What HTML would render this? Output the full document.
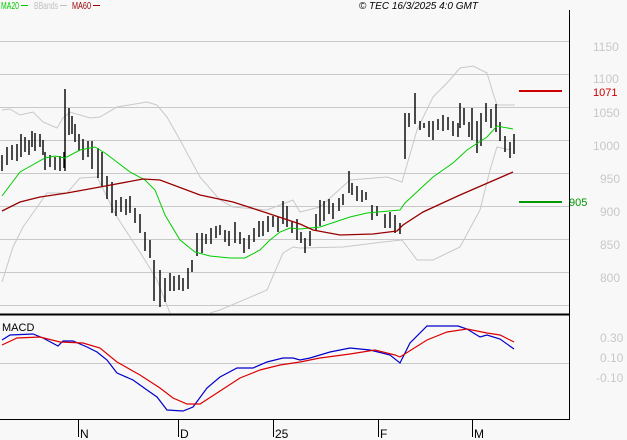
<!DOCTYPE html>
<html><head><meta charset="utf-8"><style>
html,body{margin:0;padding:0;background:#f8f8f8;}
svg{display:block;font-family:"Liberation Sans",sans-serif;}
</style></head><body>
<svg width="627" height="440" viewBox="0 0 627 440" xmlns="http://www.w3.org/2000/svg">
<rect width="627" height="440" fill="#f8f8f8"/>
<g stroke="#c8c8c8" stroke-width="1">
<line x1="0" y1="41.5" x2="569" y2="41.5"/><line x1="0" y1="74.5" x2="569" y2="74.5"/>
<line x1="0" y1="107.5" x2="569" y2="107.5"/><line x1="0" y1="140.5" x2="569" y2="140.5"/>
<line x1="0" y1="173.5" x2="569" y2="173.5"/><line x1="0" y1="206.5" x2="569" y2="206.5"/>
<line x1="0" y1="239.5" x2="569" y2="239.5"/><line x1="0" y1="272.5" x2="569" y2="272.5"/>
<line x1="0" y1="305.5" x2="569" y2="305.5"/><line x1="0" y1="363.5" x2="569" y2="363.5"/>
</g>
<g fill="none" stroke="#c8c8c8" stroke-width="1">
<polyline points="2,110 10,109 20,115 33,112 43,122 57,128 63,118 70,112 90,118 100,117 117,107 147,102 157,105 167,117 180,140 200,177 220,200 233,207 267,210 293,200 300,212 320,207 350,180 387,177 402,182 417,130 433,97 447,83 460,68 473,66 487,73 493,93 497,105 515,105"/>
<polyline points="2,282 13,247 23,227 40,203 47,193 67,193 80,178 97,177 117,217 143,257 157,280 170,313"/>
<polyline points="210,313 220,310 267,290 283,253 293,247 300,248 343,247 383,242 402,240 417,260 433,260 460,247 480,210 490,170 497,147 510,150"/>
</g>
<g stroke="#000" stroke-width="1.4" fill="none">
<path d="M2,155V171M7,147V165M12,145V160M17,144V161M21,134V157M25,137V152M29,140V155M32,131V147M35,133V151M40,134V147M43,140V155M45,152V170M50,155V167M55,157V170M60,156V171M64,152V168M65,89V171M69,108V135M72,116V134M75,124V142M79,134V151M83,139V160M88,141V157M92,141V169M98,148V178M102,152V187M107,176V199M112,182V213M116,200V216M121,197V212M126,199V215M130,196V213M135,208V223M140,214V233M145,232V251M150,240V258M154,260V301M160,270V307M165,278V302M170,273V291M174,276V291M179,275V290M183,278V291M188,268V289M192,260V272M197,233V256M202,233V253M206,234V244M211,228V244M216,226V238M220,225V235M225,230V242M229,231V246M235,222V243M240,232V244M244,238V253M249,235V249M254,228V242M259,221V237M263,221V236M268,216V232M273,216V227M278,217V232M283,201V224M287,206V227M292,222V233M297,219V240M301,232V243M305,238V253M310,231V246M316,214V230M320,200V226M324,201V221M329,199V214M333,203V219M339,198V211M343,194V205M349,171V193M352,183V195M357,186V201M362,190V202M366,192V200M372,205V220M377,206V216M385,214V228M390,212V228M395,215V233M400,223V234M405,113V159M409,113V127M415,93V124M420,121V130M424,123V128M429,121V137M433,121V140M438,119V130M443,115V131M448,117V130M453,121V136M458,123V137M460,103V128M464,108V125M469,122V137M472,108V140M477,121V153M481,113V146M486,103V122M491,109V128M496,104V132M500,122V141M505,136V152M510,142V158M514,134V154"/>
</g>
<polyline fill="none" stroke="#00cc00" stroke-width="1" points="2,196 20,172 45,158 55,156 65,158 80,150 95,147 105,153 130,172 145,180 155,190 165,215 180,240 195,252 210,256 230,258 245,258 260,250 270,240 280,232 290,228 300,229 320,227 350,217 367,213 400,210 405,203 433,177 453,163 467,150 487,137 497,126 513,129"/>
<polyline fill="none" stroke="#990000" stroke-width="1.3" points="2,211 20,202 40,197 67,193 100,187 143,179 160,180 200,195 233,202 267,213 300,224 313,230 340,235 373,234 397,231 403,225 423,212 460,195 490,182 513,172"/>
<line x1="519" y1="91" x2="562" y2="91" stroke="#cc0000" stroke-width="2"/>
<line x1="519" y1="202" x2="562" y2="202" stroke="#009900" stroke-width="2"/>
<rect x="0" y="313.5" width="569" height="2" fill="#000"/>
<line x1="569.5" y1="10" x2="569.5" y2="420" stroke="#000"/>
<line x1="0" y1="419.5" x2="570" y2="419.5" stroke="#000"/>
<g stroke="#000"><line x1="78.5" y1="419" x2="78.5" y2="437"/><line x1="178.5" y1="419" x2="178.5" y2="437"/><line x1="273.5" y1="419" x2="273.5" y2="437"/><line x1="378.5" y1="419" x2="378.5" y2="437"/><line x1="472.5" y1="419" x2="472.5" y2="437"/></g>
<g font-size="12" fill="#000"><text x="80" y="438">N</text><text x="180" y="438">D</text><text x="275" y="438">25</text><text x="380" y="438">F</text><text x="474" y="438">M</text></g>
<polyline fill="none" stroke="#0000cc" stroke-width="1.2" points="2,340 10,335 33,334 43,338 58,346 63,341 73,341 87,347 97,352 107,360 117,373 133,380 147,390 157,397 167,410 183,411 193,407 207,388 220,377 237,368 253,368 267,362 283,358 293,358 300,360 310,358 330,352 350,348 370,350 390,355 400,363 410,343 427,326 445,326 458,326 467,329 480,337 487,335 500,339 514,349"/>
<polyline fill="none" stroke="#dd0000" stroke-width="1.2" points="2,345 17,338 40,337 60,342 83,343 100,348 117,362 140,375 160,388 173,398 187,404 200,404 217,393 240,378 260,370 280,365 300,362 320,358 350,354 375,350 395,355 400,357 427,340 447,332 467,329 487,333 500,335 514,342"/>
<text x="2" y="331" font-size="11" fill="#000">MACD</text>
<g font-size="12" fill="#c8c8c8"><text x="593" y="51">1150</text><text x="593" y="83">1100</text><text x="593" y="117">1050</text><text x="593" y="150">1000</text><text x="600" y="183">950</text><text x="600" y="216">900</text><text x="600" y="249">850</text><text x="600" y="282">800</text>
<text x="600" y="342">0.30</text><text x="600" y="362">0.10</text><text x="596" y="382">-0.10</text></g>
<text x="593" y="96" font-size="11" fill="#cc0000">1071</text>
<text x="569" y="206" font-size="11" fill="#009900">905</text>
<g font-size="10"><text x="1" y="9" fill="#00cc00" textLength="18" lengthAdjust="spacingAndGlyphs">MA20</text><line x1="21" y1="5.5" x2="28" y2="5.5" stroke="#00cc00"/>
<text x="34" y="9" fill="#c0c0c0" textLength="24" lengthAdjust="spacingAndGlyphs">BBands</text><line x1="60" y1="5.5" x2="67" y2="5.5" stroke="#c0c0c0"/>
<text x="72" y="9" fill="#990000" textLength="19" lengthAdjust="spacingAndGlyphs">MA60</text><line x1="93" y1="5.5" x2="100" y2="5.5" stroke="#990000"/>
<text x="478" y="9" fill="#000" font-style="italic" text-anchor="end">© TEC 16/3/2025 4:0 GMT</text></g>
</svg>
</body></html>
